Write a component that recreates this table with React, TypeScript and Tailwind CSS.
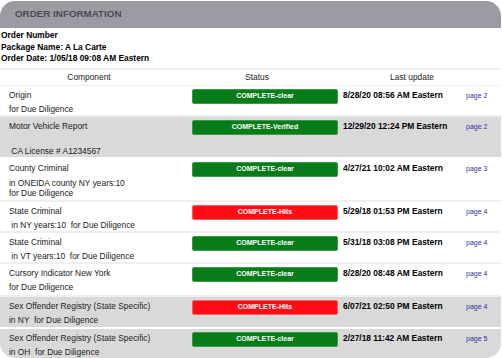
import React from "react";

type Row = {
  name: string;
  detail: string[];
  status: string;
  hit?: boolean;
  date: string;
  page: number;
  shaded?: boolean;
  h: string;
  detailClass: string;
};

// rows of the order, as shown in the report
const rows: Row[] = [
  {
    name: "Origin",
    detail: ["for Due Diligence"],
    status: "COMPLETE-clear",
    date: "8/28/20 08:56 AM Eastern",
    page: 2,
    h: "h-[31px]",
    detailClass: "leading-[14px]",
  },
  {
    name: "Motor Vehicle Report",
    detail: [" CA License # A1234567"],
    status: "COMPLETE-Verified",
    date: "12/29/20 12:24 PM Eastern",
    page: 2,
    shaded: true,
    h: "h-[42px]",
    detailClass: "mt-[11px] leading-[14px]",
  },
  {
    name: "County Criminal",
    detail: ["in ONEIDA county NY years:10", "for Due Diligence"],
    status: "COMPLETE-clear",
    date: "4/27/21 10:02 AM Eastern",
    page: 3,
    h: "h-[43px]",
    detailClass: "mt-[3px] leading-[10px]",
  },
  {
    name: "State Criminal",
    detail: [" in NY years:10  for Due Diligence"],
    status: "COMPLETE-Hits",
    hit: true,
    date: "5/29/18 01:53 PM Eastern",
    page: 4,
    h: "h-[31px]",
    detailClass: "leading-[14px]",
  },
  {
    name: "State Criminal",
    detail: [" in VT years:10  for Due Diligence"],
    status: "COMPLETE-clear",
    date: "5/31/18 03:08 PM Eastern",
    page: 4,
    h: "h-[31px]",
    detailClass: "leading-[14px]",
  },
  {
    name: "Cursory Indicator New York",
    detail: ["for Due Diligence"],
    status: "COMPLETE-clear",
    date: "8/28/20 08:48 AM Eastern",
    page: 4,
    h: "h-[33px]",
    detailClass: "leading-[14px]",
  },
  {
    name: "Sex Offender Registry (State Specific)",
    detail: ["in NY  for Due Diligence"],
    status: "COMPLETE-Hits",
    hit: true,
    date: "6/07/21 02:50 PM Eastern",
    page: 4,
    shaded: true,
    h: "h-[32px]",
    detailClass: "leading-[14px]",
  },
  {
    name: "Sex Offender Registry (State Specific)",
    detail: ["in OH  for Due Diligence"],
    status: "COMPLETE-clear",
    date: "2/27/18 11:42 AM Eastern",
    page: 5,
    shaded: true,
    h: "h-[32px]",
    detailClass: "leading-[14px]",
  },
];

function StatusPill({ label, hit }: { label: string; hit?: boolean }) {
  return (
    <div
      className={`mt-px flex h-[15px] w-[146px] items-center justify-center rounded-[2px] border text-[7px] font-bold text-white ${
        hit ? "border-[#ff5a5f] bg-[#ff0d16]" : "border-[#3a9a48] bg-[#077c18]"
      }`}
    >
      {label}
    </div>
  );
}

export default function App() {
  return (
    <div className="bg-white pt-px font-['Liberation_Sans',Arial,sans-serif]">
      <div className="h-[357px] w-[501px] overflow-hidden rounded-[15px] bg-white">
        <div className="flex h-[27px] items-center bg-[#9b9ba3] pl-[15px] text-[9.8px] font-bold text-[#4b4b50]">
          ORDER INFORMATION
        </div>

        <div className="pl-px pt-[2px] text-[8.4px] font-bold leading-[11.5px] text-black">
          <div>Order Number</div>
          <div>Package Name: A La Carte</div>
          <div>Order Date: 1/05/18 09:08 AM Eastern</div>
        </div>

        <div className="mt-[3px] grid grid-cols-[178px_158px_152px_1fr] border-t-2 border-b border-[#efefef] text-center text-[8.4px] leading-[15px] text-[#222]">
          <div>Component</div>
          <div>Status</div>
          <div>Last update</div>
          <div />
        </div>

        {rows.map((r, i) => (
          <div
            key={i}
            className={`grid grid-cols-[192px_151px_123px_1fr] items-start border-b-2 pt-[2px] text-[8.4px] text-[#222] ${r.h} ${
              r.shaded ? "border-white bg-[#d9d9d9]" : "border-[#efefef] bg-white"
            }`}
          >
            <div className="pl-[9px]">
              <div className="leading-[14px]">{r.name}</div>
              <div className={r.detailClass}>
                {r.detail.map((d, j) => (
                  <div key={j} className="whitespace-pre">
                    {d}
                  </div>
                ))}
              </div>
            </div>
            <StatusPill label={r.status} hit={r.hit} />
            <div className="font-bold leading-[15px] text-black">{r.date}</div>
            <div className="text-[7px] leading-[15px] text-[#33339a]">page {r.page}</div>
          </div>
        ))}
      </div>
    </div>
  );
}
